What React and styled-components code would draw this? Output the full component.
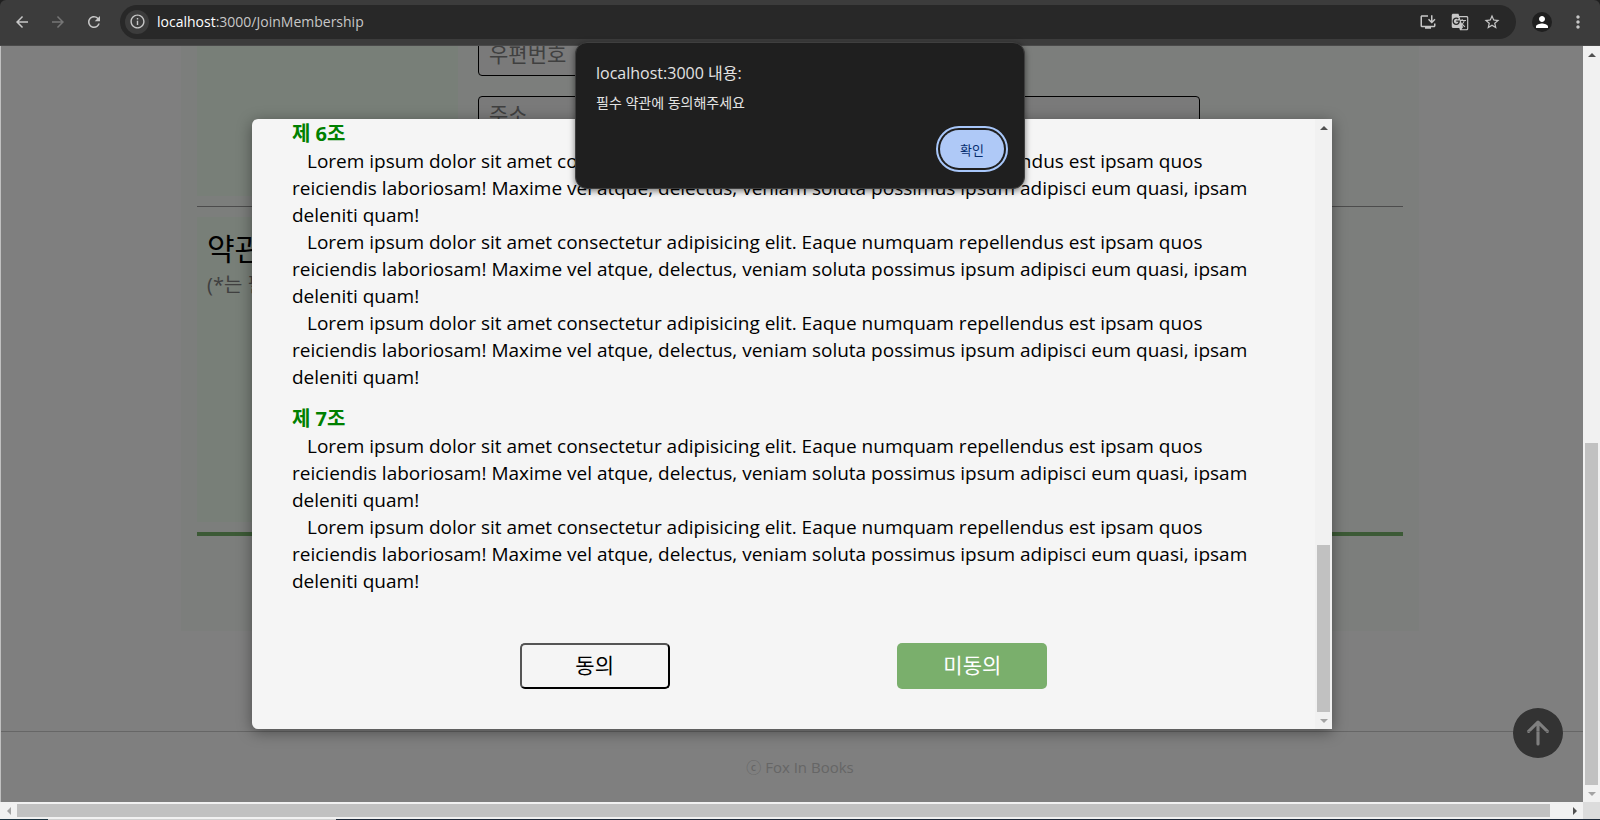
import React from "react";
import styled, { createGlobalStyle } from "styled-components";
import {
  MdArrowBack,
  MdArrowForward,
  MdRefresh,
  MdInfoOutline,
  MdInstallDesktop,
  MdGTranslate,
  MdStarBorder,
  MdPerson,
  MdMoreVert,
} from "react-icons/md";
import { BsArrowUpCircleFill } from "react-icons/bs";

const GlobalStyle = createGlobalStyle`
  *, *::before, *::after { box-sizing: border-box; }
  body { margin: 0; overflow: hidden; background: #202020; }
  body, button, input {
    font-family: "Open Sans", "Noto Sans CJK KR", sans-serif;
  }
  h2, h3, p { margin: 0; }
  button { padding: 0; cursor: pointer; }
`;

const Window = styled.div`
  position: relative;
  display: flex;
  flex-direction: column;
  height: 100vh;
  overflow: hidden;
`;

/* ---------- browser toolbar ---------- */

const Toolbar = styled.header`
  display: flex;
  align-items: center;
  flex: none;
  height: 46px;
  padding: 0 12px 2px;
  background: #3c3c3c;
  border-bottom: 1px solid #4a4a4a;
  border-radius: 6px 6px 0 0;
`;

const NavButtons = styled.nav`
  display: flex;
  gap: 16px;
  padding-right: 16px;
`;

const ToolButton = styled.button`
  display: flex;
  align-items: center;
  justify-content: center;
  width: 20px;
  height: 20px;
  border: 0;
  border-radius: 50%;
  background: ${(p) => p.$fill || "transparent"};
  color: ${(p) => p.$color || "#c7c7c7"};
`;

const AddressBar = styled.div`
  display: flex;
  align-items: center;
  flex: 1;
  gap: 8px;
  height: 34px;
  padding: 0 14px 0 5px;
  border-radius: 17px;
  background: #282828;
`;

const SiteInfo = styled(ToolButton)`
  width: 24px;
  height: 24px;
`;

const Address = styled.span`
  flex: 1;
  font-size: 14px;
  line-height: 20px;
  color: #c7c7c7;
`;

const Host = styled.span`
  color: #ffffff;
`;

const AddressTools = styled.div`
  display: flex;
  gap: 12px;
`;

const ProfileTools = styled.div`
  display: flex;
  gap: 16px;
  padding-left: 16px;
`;

/* ---------- scroll bars ---------- */

const Bar = styled.div`
  display: flex;
  flex: none;
  flex-direction: ${(p) => (p.$horizontal ? "row" : "column")};
  ${(p) => (p.$horizontal ? "flex: 1; height: 17px;" : "width: 17px;")}
  background: #f1f1f1;
`;

const BarArrow = styled.span`
  display: flex;
  align-items: center;
  justify-content: center;
  flex: none;
  width: 17px;
  height: 17px;
  color: ${(p) => (p.$dim ? "#a3a3a3" : "#505050")};
`;

const BarSpace = styled.span`
  flex: ${(p) => p.$share} 0 0;
`;

const BarThumb = styled.span`
  flex: ${(p) => p.$share} 0 0;
  margin: ${(p) => (p.$horizontal ? "2px 0" : "0 2px")};
  background: #c1c1c1;
`;

const arrowShapes = {
  up: "M0 6 L4 2 L8 6 Z",
  down: "M0 2 L4 6 L8 2 Z",
  left: "M6 0 L2 4 L6 8 Z",
  right: "M2 0 L6 4 L2 8 Z",
};

function Arrow({ to, dim }) {
  return (
    <BarArrow $dim={dim}>
      <svg width="8" height="8" viewBox="0 0 8 8" aria-hidden="true">
        <path d={arrowShapes[to]} fill="currentColor" />
      </svg>
    </BarArrow>
  );
}

function ScrollBar({ horizontal, before, thumb, after, startDim, endDim }) {
  return (
    <Bar $horizontal={horizontal} aria-hidden="true">
      <Arrow to={horizontal ? "left" : "up"} dim={startDim} />
      <BarSpace $share={before} />
      <BarThumb $share={thumb} $horizontal={horizontal} />
      <BarSpace $share={after} />
      <Arrow to={horizontal ? "right" : "down"} dim={endDim} />
    </Bar>
  );
}

/* ---------- join page ---------- */

const Body = styled.div`
  display: flex;
  flex: 1;
  min-height: 0;
`;

const Viewport = styled.div`
  position: relative;
  display: flex;
  flex-direction: column;
  justify-content: flex-end;
  flex: 1;
  min-width: 0;
  overflow: hidden;
  border-left: 1px solid #c0c0c0;
  background: #ffffff;
`;

const Page = styled.main`
  flex: none;
  width: calc(100% + 16px);
`;

const Panel = styled.section`
  max-width: 1238px;
  margin: 0 auto 100px;
  padding: 0 16px 95px;
  background: #f9fdf8;
`;

const FormRow = styled.div`
  display: flex;
  gap: 20px;
  min-height: ${(p) => p.$height};
`;

const RowLabel = styled.div`
  flex: none;
  width: 261px;
  padding: 10px;
  background: #f0fff0;
`;

const RowTitle = styled.h2`
  font-size: 30px;
  font-weight: 400;
  line-height: 44px;
  color: #000000;
`;

const RowNote = styled.p`
  font-size: 20px;
  line-height: 28px;
  color: #808080;
`;

const Fields = styled.div`
  display: flex;
  flex-direction: column;
  justify-content: flex-end;
  flex: 1;
  gap: 20px;
`;

const Field = styled.input`
  width: ${(p) => p.$width};
  height: 40px;
  padding: 0 10px 4px;
  border: 1px solid #000000;
  border-radius: 4px;
  background: #f5f5f5;
  font-size: 21px;
  &::placeholder {
    color: #808080;
  }
`;

const Divider = styled.hr`
  height: 1px;
  margin: 10px 0;
  border: 0;
  background: #999999;
`;

const EndLine = styled.hr`
  height: 4px;
  margin: 10px 0 0;
  border: 0;
  background: #78b46c;
`;

const Footer = styled.footer`
  display: flex;
  align-items: center;
  justify-content: center;
  height: 71px;
  border-top: 1px solid #cccccc;
  font-size: 15px;
  line-height: 20px;
  color: #cccccc;
`;

const TopButton = styled.button`
  position: absolute;
  right: 20px;
  bottom: 44px;
  display: flex;
  border: 0;
  border-radius: 50%;
  background: transparent;
  color: #666666;
`;

/* ---------- terms modal ---------- */

const Overlay = styled.div`
  position: absolute;
  inset: 0;
  display: flex;
  align-items: center;
  justify-content: center;
  background: rgba(0, 0, 0, 0.5);
`;

const Modal = styled.section`
  display: flex;
  width: 90%;
  max-width: 1080px;
  max-height: 90%;
  overflow: hidden;
  border-radius: 6px 0 0 6px;
  background: #f5f5f5;
  box-shadow: 0 3px 15px rgba(0, 0, 0, 0.4);
`;

const ModalContent = styled.div`
  flex: 1;
  padding: 1px 40px 40px;
`;

const Article = styled.article`
  margin-bottom: 14px;
`;

const ArticleTitle = styled.h3`
  font-size: 20px;
  font-weight: 700;
  line-height: 28px;
  color: #008000;
`;

const Clause = styled.p`
  font-size: 19px;
  line-height: 27px;
  text-indent: 15px;
  color: #000000;
`;

const Choices = styled.div`
  display: flex;
  justify-content: space-evenly;
  padding-top: 34px;
`;

const ChoiceButton = styled.button`
  width: 150px;
  height: 46px;
  padding-bottom: 2px;
  border-radius: 5px;
  border: ${(p) => (p.$filled ? "0" : "2px solid")};
  border-color: #555555 #000000 #000000 #555555;
  background: ${(p) => (p.$filled ? "#7aaf6c" : "transparent")};
  color: ${(p) => (p.$filled ? "#ffffff" : "#000000")};
  font-size: 21px;
  line-height: 30px;
`;

/* ---------- browser alert ---------- */

const Alert = styled.div`
  position: absolute;
  top: 42px;
  left: 50%;
  display: flex;
  flex-direction: column;
  width: 450px;
  margin-left: -225px;
  padding: 18px 20px 20px;
  border: 1px solid #3f3f3f;
  border-radius: 12px;
  background: #1f1f1f;
  box-shadow: 0 2px 6px rgba(0, 0, 0, 0.5);
`;

const AlertTitle = styled.h2`
  font-size: 16px;
  font-weight: 400;
  line-height: 24px;
  color: #e3e3e3;
`;

const AlertText = styled.p`
  margin-top: 8px;
  font-size: 14px;
  line-height: 20px;
  color: #e3e3e3;
`;

const AlertButton = styled.button`
  align-self: flex-end;
  width: 64px;
  height: 38px;
  margin-top: 17px;
  border: 0;
  border-radius: 19px;
  outline: 2px solid #a8c7fa;
  outline-offset: 2px;
  background: #afc9f7;
  color: #062e6f;
  font-size: 13px;
`;

/* ---------- bottom edge of the window ---------- */

const BottomBar = styled.div`
  display: flex;
  flex: none;
`;

const Corner = styled.span`
  width: 17px;
  height: 17px;
  background: #dcdcdc;
`;

const Edge = styled.div`
  flex: none;
  height: 1px;
  background: linear-gradient(
    to right,
    #1c3340 48px,
    #d0d0d0 48px 336px,
    #1e2a3a 336px
  );
`;

const clause =
  "Lorem ipsum dolor sit amet consectetur adipisicing elit. Eaque numquam repellendus est ipsam quos reiciendis laboriosam! Maxime vel atque, delectus, veniam soluta possimus ipsum adipisci eum quasi, ipsam deleniti quam!";

const articles = [
  { title: "제 6조", clauses: 3 },
  { title: "제 7조", clauses: 2 },
];

export default function App() {
  return (
    <Window>
      <GlobalStyle />
      <Toolbar>
        <NavButtons>
          <ToolButton aria-label="뒤로"><MdArrowBack size={18} /></ToolButton>
          <ToolButton aria-label="앞으로" $color="#757575"><MdArrowForward size={18} /></ToolButton>
          <ToolButton aria-label="새로고침"><MdRefresh size={18} /></ToolButton>
        </NavButtons>
        <AddressBar>
          <SiteInfo aria-label="사이트 정보" $fill="#3c3c3c"><MdInfoOutline size={17} /></SiteInfo>
          <Address><Host>localhost</Host>:3000/JoinMembership</Address>
          <AddressTools>
            <ToolButton aria-label="앱 설치"><MdInstallDesktop size={18} /></ToolButton>
            <ToolButton aria-label="번역"><MdGTranslate size={18} /></ToolButton>
            <ToolButton aria-label="북마크"><MdStarBorder size={18} /></ToolButton>
          </AddressTools>
        </AddressBar>
        <ProfileTools>
          <ToolButton aria-label="프로필" $fill="#1f1f1f" $color="#ffffff"><MdPerson size={18} /></ToolButton>
          <ToolButton aria-label="메뉴"><MdMoreVert size={20} /></ToolButton>
        </ProfileTools>
      </Toolbar>

      <Body>
        <Viewport>
          <Page>
            <Panel>
              <FormRow $height="160px">
                <RowLabel />
                <Fields>
                  <Field $width="300px" placeholder="우편번호" aria-label="우편번호" />
                  <Field $width="722px" placeholder="주소" aria-label="주소" />
                  <Field $width="722px" placeholder="상세주소" aria-label="상세주소" />
                </Fields>
              </FormRow>
              <Divider />
              <FormRow $height="305px">
                <RowLabel>
                  <RowTitle>약관</RowTitle>
                  <RowNote>(*는 필수)</RowNote>
                </RowLabel>
              </FormRow>
              <EndLine />
            </Panel>
            <Footer>ⓒ Fox In Books</Footer>
          </Page>
          <TopButton aria-label="맨 위로"><BsArrowUpCircleFill size={50} /></TopButton>
          <Overlay>
            <Modal role="dialog" aria-label="약관">
              <ModalContent>
                {articles.map((article) => (
                  <Article key={article.title}>
                    <ArticleTitle>{article.title}</ArticleTitle>
                    {Array.from({ length: article.clauses }, (_, i) => (
                      <Clause key={i}>{clause}</Clause>
                    ))}
                  </Article>
                ))}
                <Choices>
                  <ChoiceButton>동의</ChoiceButton>
                  <ChoiceButton $filled>미동의</ChoiceButton>
                </Choices>
              </ModalContent>
              <ScrollBar before={409} thumb={167} after={0} endDim />
            </Modal>
          </Overlay>
        </Viewport>
        <ScrollBar before={380} thumb={342} after={0} endDim />
      </Body>
      <BottomBar>
        <ScrollBar horizontal before={0} thumb={1533} after={16} startDim />
        <Corner />
      </BottomBar>
      <Edge />

      <Alert role="alertdialog" aria-labelledby="alert-title">
        <AlertTitle id="alert-title">localhost:3000 내용:</AlertTitle>
        <AlertText>필수 약관에 동의해주세요</AlertText>
        <AlertButton>확인</AlertButton>
      </Alert>
    </Window>
  );
}
